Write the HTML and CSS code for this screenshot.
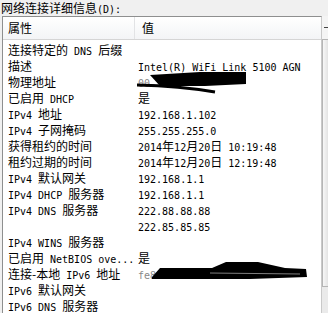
FILE: index.html
```html
<!DOCTYPE html>
<html>
<head>
<title>网络连接详细信息</title>
<link rel="stylesheet" href="styles.css">
</head>
<body>

<div class="window">
    <div class="title">网络连接详细信息<span class="m">(D):</span></div>
    <div class="frame">
        <div class="list">
            <div class="head">
                <div class="hname">属性</div>
                <div class="hval">值</div>
            </div>
            <div class="rows">
                <div class="row"><div class="name">连接特定的<span class="m"> DNS </span>后缀</div><div class="val"></div></div>
                <div class="row"><div class="name">描述</div><div class="val"><span class="m">Intel(R) WiFi Link 5100 AGN</span></div></div>
                <div class="row"><div class="name">物理地址</div><div class="val"><span class="m faded">00-</span></div></div>
                <div class="row"><div class="name">已启用<span class="m"> DHCP</span></div><div class="val">是</div></div>
                <div class="row"><div class="name"><span class="m">IPv4 </span>地址</div><div class="val"><span class="m">192.168.1.102</span></div></div>
                <div class="row"><div class="name"><span class="m">IPv4 </span>子网掩码</div><div class="val"><span class="m">255.255.255.0</span></div></div>
                <div class="row"><div class="name">获得租约的时间</div><div class="val"><span class="m">2014</span>年<span class="m">12</span>月<span class="m">20</span>日<span class="m"> 10:19:48</span></div></div>
                <div class="row"><div class="name">租约过期的时间</div><div class="val"><span class="m">2014</span>年<span class="m">12</span>月<span class="m">20</span>日<span class="m"> 12:19:48</span></div></div>
                <div class="row"><div class="name"><span class="m">IPv4 </span>默认网关</div><div class="val"><span class="m">192.168.1.1</span></div></div>
                <div class="row"><div class="name"><span class="m">IPv4 DHCP </span>服务器</div><div class="val"><span class="m">192.168.1.1</span></div></div>
                <div class="row"><div class="name"><span class="m">IPv4 DNS </span>服务器</div><div class="val"><span class="m">222.88.88.88</span></div></div>
                <div class="row"><div class="name"></div><div class="val"><span class="m">222.85.85.85</span></div></div>
                <div class="row"><div class="name"><span class="m">IPv4 WINS </span>服务器</div><div class="val"></div></div>
                <div class="row"><div class="name">已启用<span class="m"> NetBIOS ove...</span></div><div class="val">是</div></div>
                <div class="row"><div class="name">连接-本地<span class="m"> IPv6 </span>地址</div><div class="val"><span class="m faded">fe8</span></div></div>
                <div class="row"><div class="name"><span class="m">IPv6 </span>默认网关</div><div class="val"></div></div>
                <div class="row"><div class="name"><span class="m">IPv6 DNS </span>服务器</div><div class="val"></div></div>
            </div>
        </div>
        <div class="scroll">
            <div class="arrow"></div>
            <div class="thumb"></div>
        </div>
    </div>

    <!-- redaction marks drawn over the MAC and IPv6 values -->
    <svg class="redact" width="328" height="313" viewBox="0 0 328 313">
        <path d="M150 75 L200 72 L246 72 L246 84 L205 86 L160 86 Z" fill="#000"/>
        <path d="M137 85 Q180 86 215 92" stroke="#000" stroke-width="3" fill="none"/>
        <path d="M152 277 L160 268 L212 268 L226 262 L258 262 L285 268 L306 269 L307 277 L250 279 L152 279 Z" fill="#000"/>
        <path d="M210 273 L300 274" stroke="#fff" stroke-width="1" opacity="0.5"/>
    </svg>
</div>

</body>
</html>
```

FILE: styles.css
```css
body {
    margin: 0;
    background: #f0f0f0;
    font-family: "Noto Sans CJK SC", sans-serif;
    font-size: 12px;
    color: #000;
}
.window {
    position: relative;
    width: 328px;
    height: 313px;
    overflow: hidden;
}
.title {
    height: 16px;
    line-height: 15px;
    padding-left: 1px;
}
.m {
    font-family: "DejaVu Sans Mono", monospace;
    font-size: 10px;
    white-space: pre;
}
.faded {
    color: #888;
}
.frame {
    display: flex;
    margin-left: 2px;
    height: 297px;
}
.list {
    flex: 1;
    background: #fff;
    border-top: 1px solid #8e8f8f;
    border-left: 1px solid #8e8f8f;
    border-right: 1px solid #c9c9c9;
}
.head {
    display: grid;
    grid-template-columns: 132px 1fr;
    height: 22px;
    line-height: 22px;
    background: linear-gradient(#ffffff, #f3f4f6);
    border-bottom: 1px solid #d5d5d5;
}
.hname {
    padding-left: 5px;
    border-right: 1px solid #e2e3e5;
}
.hval {
    padding-left: 7px;
}
.rows {
    padding-top: 2px;
}
.row {
    display: grid;
    grid-template-columns: 132px 1fr;
    height: 16px;
    line-height: 16px;
    white-space: nowrap;
}
.name {
    padding-left: 5px;
    overflow: hidden;
}
.val {
    padding-left: 3px;
}
.scroll {
    width: 6px;
    display: flex;
    flex-direction: column;
    background: #eaeaea;
}
.arrow {
    height: 23px;
    background: #f4f4f4;
    position: relative;
}
.arrow::after {
    content: "";
    position: absolute;
    left: 2px;
    top: 11px;
    width: 4px;
    height: 1px;
    background: #444;
}
.thumb {
    height: 246px;
    border-left: 1px solid #b5b5b5;
    border-top: 1px solid #b5b5b5;
    border-bottom: 1px solid #b5b5b5;
    background: linear-gradient(90deg, #f7f7f7, #e3e3e3);
}
.redact {
    position: absolute;
    left: 0;
    top: 0;
    pointer-events: none;
}
```
